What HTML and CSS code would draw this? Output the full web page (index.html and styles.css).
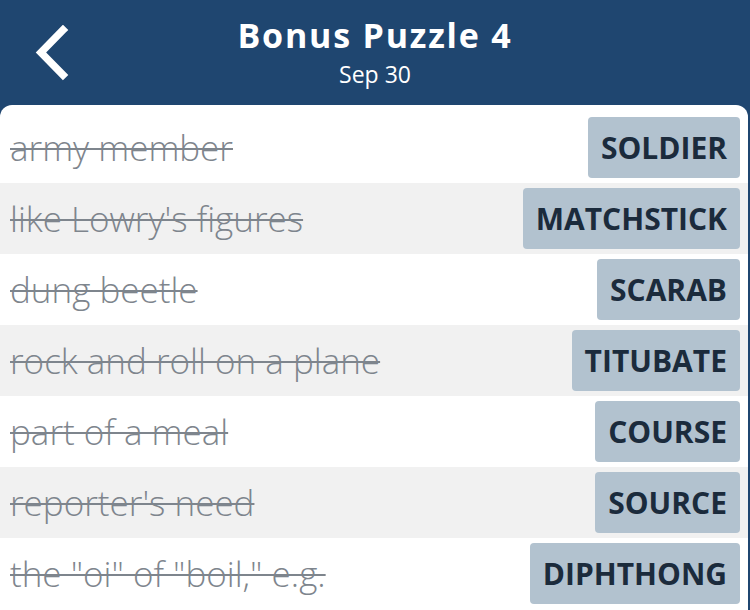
FILE: index.html
```html
<!DOCTYPE html>
<html>
<head>
<meta name="viewport" content="width=device-width, initial-scale=1.0">
<link rel="stylesheet" href="styles.css">
</head>
<body>

<div class="header">
  <a href="#" class="back">
    <svg width="40" height="56" viewBox="0 0 40 56">
      <path d="M30 5 L8 27.5 L30 50" fill="none" stroke="#fff" stroke-width="7.5" stroke-linecap="square"/>
    </svg>
  </a>
  <div class="title">
    <h1>Bonus Puzzle 4</h1>
    <div class="date">Sep 30</div>
  </div>
</div>

<div class="card">
  <div class="row">
    <span class="clue">army member</span>
    <span class="answer">SOLDIER</span>
  </div>
  <div class="row">
    <span class="clue">like Lowry's figures</span>
    <span class="answer">MATCHSTICK</span>
  </div>
  <div class="row">
    <span class="clue">dung beetle</span>
    <span class="answer">SCARAB</span>
  </div>
  <div class="row">
    <span class="clue">rock and roll on a plane</span>
    <span class="answer">TITUBATE</span>
  </div>
  <div class="row">
    <span class="clue">part of a meal</span>
    <span class="answer">COURSE</span>
  </div>
  <div class="row">
    <span class="clue">reporter's need</span>
    <span class="answer">SOURCE</span>
  </div>
  <div class="row">
    <span class="clue">the "oi" of "boil," e.g.</span>
    <span class="answer">DIPHTHONG</span>
  </div>
</div>

</body>
</html>
```

FILE: styles.css
```css
body {
  margin: 0;
  font-family: "Open Sans", sans-serif;
  background-color: #1f4670;
  height: 610px;
  overflow: hidden;
}

.header {
  position: relative;
  height: 105px;
  display: flex;
  justify-content: center;
  align-items: flex-start;
  color: white;
}

.back {
  position: absolute;
  left: 33px;
  top: 25px;
}

.title {
  text-align: center;
  padding-top: 13px;
}

.title h1 {
  margin: 0;
  font-size: 34px;
  font-weight: 700;
  letter-spacing: 1.8px;
  line-height: 44px;
}

.date {
  font-size: 23px;
  line-height: 34px;
}

.card {
  background-color: white;
  border-radius: 12px 12px 0 0;
  padding-top: 7px;
  height: 498px;
  overflow: hidden;
  margin-right: 2px;
}

.row {
  height: 71px;
  box-sizing: border-box;
  padding: 5px 8px 5px 10px;
  display: flex;
  align-items: center;
  justify-content: space-between;
}

.row:nth-child(even) {
  background-color: #f1f1f1;
}

.clue {
  font-size: 35px;
  font-weight: 300;
  color: #7e858d;
  text-decoration: line-through;
  text-decoration-thickness: 2px;
}

.answer {
  height: 100%;
  display: flex;
  align-items: center;
  padding: 0 13px;
  background-color: #b2c2cf;
  border-radius: 4px;
  color: #1b2b3c;
  font-size: 30px;
  font-weight: 700;
}
```
